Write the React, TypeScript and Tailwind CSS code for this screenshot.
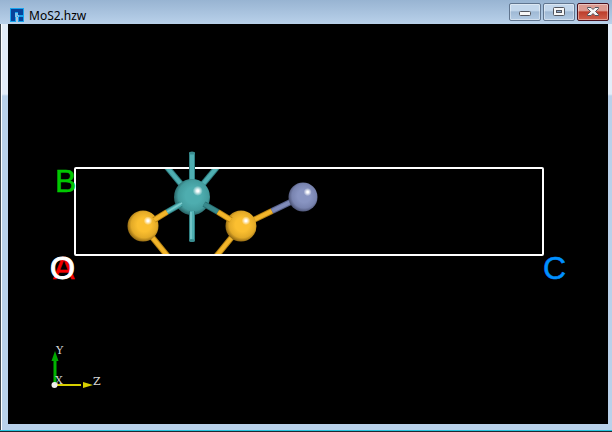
import type { ReactNode } from "react";

function AppIcon() {
  return (
    <svg viewBox="0 0 14 14" className="size-3.5 shrink-0" aria-hidden="true">
      <path d="M0 0H14V14H8V9H6V14H0Z" fill="#18a5ee" />
      <path d="M1 1H13V4H5V13H1Z" fill="#07439a" />
      <path d="M8 4H13V7H8Z" fill="#07439a" />
      <path d="M9 9H13V13H9Z" fill="#07439a" />
      <path d="M5 5H8V7H9V9H8V8H7V9H5Z" fill="#7cc4ee" />
      <path d="M6 9H8V14H6Z" fill="#a8c4e0" />
    </svg>
  );
}

function WindowButton({ label, danger, children }: { label: string; danger?: boolean; children: ReactNode }) {
  const tone = danger
    ? "border-[#48101d] bg-linear-to-b from-[#dc9b91] from-40% via-[#bd3d2b] via-50% to-[#d0604c]"
    : "border-[#60758f] bg-linear-to-b from-[#c3d7ec] from-40% via-[#9fb9d5] via-50% to-[#b3cbe4]";
  return (
    <button
      type="button"
      aria-label={label}
      className={`flex h-[18px] w-8 items-center justify-center rounded-[2px] border inset-ring inset-ring-white/40 ${tone}`}
    >
      {children}
    </button>
  );
}

function TitleBar() {
  return (
    <header className="flex h-6 items-start justify-between bg-linear-to-b from-[#98b4d2] to-[#b9d1ea] pl-2 pr-[3px]">
      <div className="flex items-start gap-[5px] pl-0.5 pt-2">
        <AppIcon />
        <h1 className="font-['Noto_Sans','Open_Sans',sans-serif] text-xs leading-4 text-black">MoS2.hzw</h1>
      </div>
      <div className="flex gap-0.5 pt-[3px]">
        <WindowButton label="Minimize">
          <svg viewBox="0 0 12 12" className="size-3">
            <rect x="0.500" y="5.500" width="11" height="4" rx="1" fill="#f7f7f7" stroke="#53565f" />
          </svg>
        </WindowButton>
        <WindowButton label="Maximize">
          <svg viewBox="0 0 12 12" className="size-3">
            <rect x="0.500" y="1.500" width="11" height="8" rx="1" fill="#f7f7f7" stroke="#53565f" />
            <rect x="3.500" y="4.500" width="5" height="2" fill="#8fa9cb" stroke="#53565f" />
          </svg>
        </WindowButton>
        <WindowButton label="Close" danger>
          <svg viewBox="0 0 12 12" className="size-3">
            <path d="M0.500 1.500H4L6 3.500L8 1.500H11.500V2.500L8.500 5.500L11.500 8.500V9.500H8L6 7.500L4 9.500H0.500V8.500L3.500 5.500L0.500 2.500Z" fill="#f7f7f7" stroke="#53565f" />
          </svg>
        </WindowButton>
      </div>
    </header>
  );
}

type Point = [number, number];

function Bond({ from, to, paint }: { from: Point; to: Point; paint: "teal" | "shade" | "gold" | "slate" }) {
  const tones = {
    teal: ["#2f7f82", "#4fafb2"],
    shade: ["#256f72", "#38898c"],
    gold: ["#b98514", "#f2b52a"],
    slate: ["#5a648e", "#7f8ab8"],
  }[paint];
  return (
    <g>
      <line x1={from[0]} y1={from[1]} x2={to[0]} y2={to[1]} stroke={tones[0]} strokeWidth="6" />
      <line x1={from[0]} y1={from[1]} x2={to[0]} y2={to[1]} stroke={tones[1]} strokeWidth="4" />
    </g>
  );
}

function Atom({ x, y, r, paint }: { x: number; y: number; r: number; paint: string }) {
  return (
    <g>
      <circle cx={x} cy={y} r={r} fill={`url(#${paint})`} />
      <circle cx={x + r * 0.32} cy={y - r * 0.34} r={r * 0.28} fill="url(#shine)" />
    </g>
  );
}

function Scene() {
  return (
    <svg viewBox="8 24 600 400" className="block w-full" role="img" aria-label="MoS2 crystal cell">
      <defs>
        <radialGradient id="teal" cx="0.54" cy="0.46" r="0.56">
          <stop offset="0.4" stopColor="#4eadaf" />
          <stop offset="0.75" stopColor="#439c9e" />
          <stop offset="1" stopColor="#255c5e" />
        </radialGradient>
        <radialGradient id="gold" cx="0.54" cy="0.46" r="0.56">
          <stop offset="0.4" stopColor="#fbbf30" />
          <stop offset="0.75" stopColor="#e3aa27" />
          <stop offset="1" stopColor="#8a6312" />
        </radialGradient>
        <radialGradient id="slate" cx="0.54" cy="0.46" r="0.56">
          <stop offset="0.4" stopColor="#8894c1" />
          <stop offset="0.75" stopColor="#7984b0" />
          <stop offset="1" stopColor="#484f70" />
        </radialGradient>
        <radialGradient id="shine">
          <stop offset="0.2" stopColor="#ffffff" />
          <stop offset="1" stopColor="#ffffff" stopOpacity="0" />
        </radialGradient>
        <clipPath id="cell">
          <rect x="75" y="168" width="469" height="87" />
        </clipPath>
      </defs>

      <g clipPath="url(#cell)">
        <Bond from={[166, 166]} to={[186, 190]} paint="teal" />
        <Bond from={[218, 166]} to={[198, 190]} paint="teal" />
        <Bond from={[143, 226]} to={[170, 259]} paint="gold" />
        <Bond from={[241, 226]} to={[214, 259]} paint="gold" />
      </g>
      <rect x="75" y="168" width="468" height="87" rx="1" fill="none" stroke="#ffffff" strokeWidth="2" />
      <Bond from={[192, 153]} to={[192, 190]} paint="teal" />
      <ellipse cx="192" cy="153" rx="3" ry="1.500" fill="#3a8d90" />
      <Bond from={[241, 226]} to={[272, 211]} paint="gold" />
      <Bond from={[272, 211]} to={[303, 196]} paint="slate" />
      <Atom x={303} y={197} r={14.5} paint="slate" />
      <Atom x={143} y={226} r={15.5} paint="gold" />
      <Atom x={241} y={226} r={15.5} paint="gold" />
      <Atom x={192} y={197} r={18} paint="teal" />
      <Bond from={[167, 212]} to={[181, 204]} paint="teal" />
      <Bond from={[154, 220]} to={[167, 212]} paint="gold" />
      <Bond from={[204, 204]} to={[218, 212]} paint="shade" />
      <Bond from={[218, 212]} to={[231, 220]} paint="gold" />
      <Bond from={[192, 211]} to={[192, 240]} paint="teal" />
      <path d="M167 212L182 203M191 212V239" fill="none" stroke="#7ccccd" strokeWidth="1.500" />
      <ellipse cx="192" cy="240.500" rx="3" ry="1.500" fill="#3a8d90" />

      <g className="font-['Liberation_Sans',Arial,sans-serif] text-[32px]" strokeWidth="0.500">
        <text x="55" y="192" fill="#00c800" stroke="#00c800">B</text>
        <text x="53" y="279" fill="#f50000" stroke="#f50000">A</text>
        <text x="50" y="279" fill="#ffffff" stroke="#ffffff" strokeWidth="1">O</text>
        <text x="543" y="279" fill="#0090ff" stroke="#0090ff">C</text>
      </g>

      <path d="M55 385V360" stroke="#00b400" strokeWidth="3" />
      <path d="M51.500 361L55 351L58.500 361Z" fill="#00a800" />
      <path d="M55 385H81" stroke="#d8d000" strokeWidth="2" />
      <path d="M83 382L93 385L83 388Z" fill="#d8d000" />
      <circle cx="54.500" cy="385" r="3" fill="#eeeeee" />
      <g className="font-['DejaVu_Serif',serif] text-[11px]" fill="#d8d8d8">
        <text x="56" y="354">Y</text>
        <text x="55" y="384">X</text>
        <text x="93" y="385">Z</text>
      </g>
    </svg>
  );
}

export default function App() {
  return (
    <div className="flex min-h-screen flex-col border-b border-[#202830] bg-[#b9d1ea]">
      <TitleBar />
      <main className="grow border-b border-[#27c4de] bg-linear-to-b from-[#e3edf8] from-[70px] to-[#b9d1ea] to-[72px] pb-1.5 pl-2 pr-1 shadow-[inset_1px_0_#404850,inset_2px_0_#ffffff]">
        <div className="bg-black">
          <Scene />
        </div>
      </main>
    </div>
  );
}
